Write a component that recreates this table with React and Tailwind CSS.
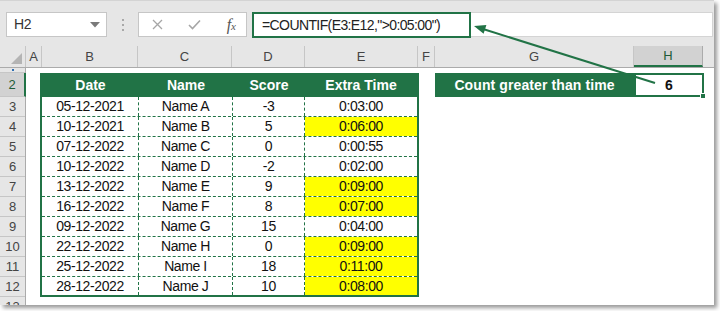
import React from 'react'

const GREEN = '#217346'

const rows = [
  ['05-12-2021', 'Name A', '-3', '0:03:00', false],
  ['10-12-2021', 'Name B', '5', '0:06:00', true],
  ['07-12-2022', 'Name C', '0', '0:00:55', false],
  ['10-12-2022', 'Name D', '-2', '0:02:00', false],
  ['13-12-2022', 'Name E', '9', '0:09:00', true],
  ['16-12-2022', 'Name F', '8', '0:07:00', true],
  ['09-12-2022', 'Name G', '15', '0:04:00', false],
  ['22-12-2022', 'Name H', '0', '0:09:00', true],
  ['25-12-2022', 'Name I', '18', '0:11:00', true],
  ['28-12-2022', 'Name J', '10', '0:08:00', true],
]

const colHeaders = [
  { label: 'A', w: 'w-[16px]' },
  { label: 'B', w: 'w-[96px]' },
  { label: 'C', w: 'w-[94px]' },
  { label: 'D', w: 'w-[73px]' },
  { label: 'E', w: 'w-[113px]' },
  { label: 'F', w: 'w-[17px]' },
  { label: 'G', w: 'w-[199px]' },
]

const App = () => {
  return (
    <div className="w-[720px] h-[311px] bg-white overflow-hidden font-['Liberation_Sans',Arial,sans-serif]">
      <div className="relative w-[714px] h-[305px] bg-white overflow-hidden shadow-[3px_3px_4px_rgba(0,0,0,0.4)]">
        {/* Formula bar */}
        <div className="h-[46px] bg-[#e6e6e6] border-t border-[#d4d4d4] flex items-start pt-[11px] pl-[6px]">
          <div className="w-[101px] h-[25px] bg-white border border-[#c6c6c6] flex items-center justify-between pl-[7px] pr-[6px]">
            <span className="text-[14px] text-[#333] tracking-[-0.3px]">H2</span>
            <svg width="10" height="6" viewBox="0 0 10 6">
              <polygon points="0,0 10,0 5,5.5" fill="#7a7a7a" />
            </svg>
          </div>
          <div className="w-[31px] h-[25px] flex flex-col items-center justify-center gap-[3px]">
            <span className="w-[2px] h-[2px] bg-[#a8a8a8]" />
            <span className="w-[2px] h-[2px] bg-[#a8a8a8]" />
            <span className="w-[2px] h-[2px] bg-[#a8a8a8]" />
          </div>
          <div className="w-[109px] h-[25px] bg-white border border-[#c6c6c6] flex items-center pl-[13px] pr-[10px] justify-between">
            <svg width="11" height="11" viewBox="0 0 11 11">
              <path d="M1 1 L10 10 M10 1 L1 10" stroke="#a6a6a6" strokeWidth="1.3" />
            </svg>
            <svg width="13" height="11" viewBox="0 0 13 11">
              <path d="M1 6 L4.5 9.5 L12 1.5" stroke="#a6a6a6" strokeWidth="1.6" fill="none" />
            </svg>
            <span className="font-['Liberation_Serif',serif] italic text-[16px] text-[#555] leading-none">
              f<span className="text-[11px]">x</span>
            </span>
          </div>
          <div className="ml-[5px] w-[219px] h-[26px] bg-white border-2 border-[#217346] flex items-center pl-[8px]">
            <span className="text-[14px] text-[#222] tracking-[-0.6px] whitespace-nowrap">=COUNTIF(E3:E12,"&gt;0:05:00")</span>
          </div>
          <div className="flex-1 h-[25px] bg-white border-y border-r border-[#d4d4d4] mr-[1px]" />
        </div>

        {/* Column headers */}
        <div className="h-[22px] flex bg-[#e6e6e6] border-b border-[#ababab] text-[13px] text-[#444]">
          <div className="w-[26px] border-r border-[#c6c6c6] flex items-end justify-end pr-[3px] pb-[3px]">
            <svg width="11" height="11" viewBox="0 0 11 11">
              <polygon points="11,0 11,11 0,11" fill="#b4b4b4" />
            </svg>
          </div>
          {colHeaders.map(({ label, w }) => (
            <div key={label} className={`${w} border-r border-[#c6c6c6] flex items-center justify-center`}>
              {label}
            </div>
          ))}
          <div className="w-[69px] bg-[#d2d2d2] border-r border-[#ababab] border-b-2 border-b-[#217346] flex items-center justify-center text-[#1e5c38]">
            H
          </div>
          <div className="flex-1" />
        </div>

        {/* Sheet */}
        <div className="flex">
          {/* Row headers */}
          <div className="w-[26px] flex flex-col bg-[#e6e6e6] border-r border-[#ababab] text-[13px] text-[#444]">
            <div className="h-[5px] border-b border-[#c6c6c6] flex justify-center">
              <span className="w-[2px] h-[2px] mt-[1px] bg-[#2f6fb3]" />
            </div>
            <div className="h-[24px] bg-[#d2d2d2] border-b border-[#c6c6c6] border-r-2 border-r-[#217346] -mr-px flex items-center justify-center text-[#1e5c38]">
              2
            </div>
            {[3, 4, 5, 6, 7, 8, 9, 10, 11, 12, 13].map((n) => (
              <div key={n} className="h-[20px] border-b border-[#c6c6c6] flex items-center justify-center">
                {n}
              </div>
            ))}
          </div>

          {/* Cells */}
          <div className="flex-1 flex items-start pt-[5px] pl-[14px] text-[14px] text-[#111]">
            {/* Data table */}
            <div className="w-[379px] border-x-2 border-b-2 border-[#217346]">
              <div className="h-[24px] flex bg-[#217346] text-white font-bold text-[14px]">
                <div className="w-[97px] flex items-center justify-center">Date</div>
                <div className="w-[94px] flex items-center justify-center">Name</div>
                <div className="w-[72px] flex items-center justify-center">Score</div>
                <div className="w-[112px] flex items-center justify-center">Extra Time</div>
              </div>
              {rows.map(([date, name, score, time, hi], i) => {
                const last = i === rows.length - 1
                const rowCls = last ? 'h-[18px]' : 'h-[20px] border-b border-dashed border-[#217346]'
                return (
                  <div key={date + name} className={`flex tracking-[-0.4px] ${rowCls}`}>
                    <div className="w-[97px] border-r border-dashed border-[#217346] flex items-center justify-center">{date}</div>
                    <div className="w-[94px] border-r border-dashed border-[#217346] flex items-center justify-center">{name}</div>
                    <div className="w-[72px] border-r border-dashed border-[#217346] flex items-center justify-center">{score}</div>
                    <div className={`w-[112px] flex items-center justify-center ${hi ? 'bg-[#ffff00]' : ''}`}>{time}</div>
                  </div>
                )
              })}
            </div>

            {/* Result */}
            <div className="ml-[16px] flex">
              <div className="w-[199px] h-[24px] bg-[#217346] text-white font-bold text-[14px] tracking-[0.1px] flex items-center justify-center">
                Count greater than time
              </div>
              <div className="relative w-[70px] h-[24px] border-2 border-[#217346] bg-white font-bold text-[14px] flex items-center justify-center">
                6
                <span className="absolute -right-[4px] -bottom-[4px] w-[6px] h-[6px] bg-[#217346] border border-white" />
              </div>
            </div>
          </div>
        </div>

        {/* Arrow */}
        <svg className="absolute inset-0 pointer-events-none" width="714" height="305" viewBox="0 0 714 305">
          <line x1="655" y1="83" x2="483" y2="29" stroke={GREEN} strokeWidth="2" />
          <polygon points="474,26 486.4,25 483.6,33.8" fill={GREEN} />
        </svg>
      </div>
    </div>
  )
}

export default App
